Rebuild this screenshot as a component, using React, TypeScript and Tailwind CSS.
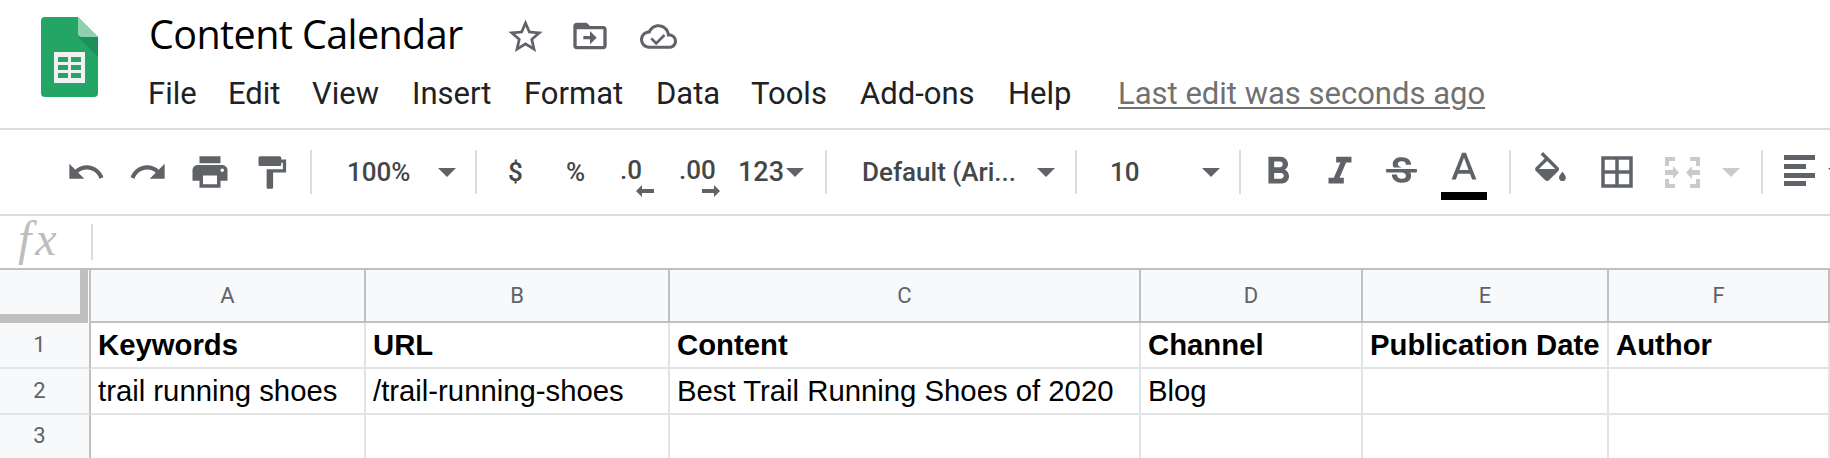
const P = ({ d, className = "" }: { d: string; className?: string }) => (
  <svg viewBox="0 0 24 24" className={`shrink-0 text-[#5f6368] ${className}`} fill="currentColor">
    <path d={d} />
  </svg>
);

const Tri = ({ className = "border-t-[#5f6368]" }: { className?: string }) => (
  <span className={`w-0 h-0 shrink-0 border-l-[9px] border-r-[9px] border-t-[9px] border-l-transparent border-r-transparent ${className}`} />
);

const Sep = ({ className = "" }: { className?: string }) => <span className={`w-[2px] h-[44px] bg-[#dadce0] shrink-0 ${className}`} />;

const menu = [
  { label: "File", cls: "w-[80px]" },
  { label: "Edit", cls: "w-[84px]" },
  { label: "View", cls: "w-[100px]" },
  { label: "Insert", cls: "w-[112px]" },
  { label: "Format", cls: "w-[132px]" },
  { label: "Data", cls: "w-[95px]" },
  { label: "Tools", cls: "w-[109px]" },
  { label: "Add-ons", cls: "w-[148px]" },
  { label: "Help", cls: "w-[110px]" },
];

const cols = ["A", "B", "C", "D", "E", "F"];
const rows = [
  { n: "1", bold: true, last: false, cells: ["Keywords", "URL", "Content", "Channel", "Publication Date", "Author"] },
  { n: "2", bold: false, last: false, cells: ["trail running shoes", "/trail-running-shoes", "Best Trail Running Shoes of 2020", "Blog", "", ""] },
  { n: "3", bold: false, last: true, cells: ["", "", "", "", "", ""] },
];

function Logo() {
  return (
    <svg viewBox="0 0 57 80" className="w-[57px] h-[80px] shrink-0">
      <path d="M4 0h33l20 20v56a4 4 0 0 1-4 4H4a4 4 0 0 1-4-4V4a4 4 0 0 1 4-4z" fill="#23a566" />
      <path d="M37 20l20 20V20z" fill="#1c8f5a" />
      <path d="M37 0l20 20H41a4 4 0 0 1-4-4z" fill="#8ed1b1" />
      <rect x="13" y="35" width="31" height="31" fill="#f1f1f1" />
      <g fill="#23a566">
        <rect x="17" y="40" width="10" height="5" />
        <rect x="30" y="40" width="10" height="5" />
        <rect x="17" y="48" width="10" height="5" />
        <rect x="30" y="48" width="10" height="5" />
        <rect x="17" y="56" width="10" height="5" />
        <rect x="30" y="56" width="10" height="5" />
      </g>
    </svg>
  );
}

export default function App() {
  return (
    <div className="w-[1830px] h-[458px] overflow-hidden bg-white font-['Roboto',sans-serif]">
      {/* title + menus */}
      <header className="h-[130px] border-b-2 border-[#dadce0] flex items-start">
        <div className="ml-[41px] mt-[17px]">
          <Logo />
        </div>
        <div className="ml-[50px]">
          <div className="flex items-center h-[56px] mt-[8px]">
            <h1 className="text-[39.5px] leading-none text-black font-['Open_Sans',sans-serif] tracking-[-0.6px] w-[357px] pl-[1px] -mt-[2px] whitespace-nowrap">Content Calendar</h1>
            <P className="w-[41px] h-[41px]" d="M22 9.24l-7.19-.62L12 2 9.19 8.63 2 9.24l5.46 4.73L5.82 21 12 17.27 18.18 21l-1.63-7.03L22 9.24zM12 15.4l-3.76 2.27 1-4.28-3.32-2.88 4.38-.38L12 6.1l1.71 4.04 4.38.38-3.32 2.88 1 4.28L12 15.4z" />
            <P className="w-[40px] h-[40px] ml-[24px]" d="M20 6h-8l-2-2H4c-1.1 0-2 .9-2 2v12c0 1.1.9 2 2 2h16c1.1 0 2-.9 2-2V8c0-1.1-.9-2-2-2zm0 12H4V8h16v10zm-8-1l4-4-4-4v3H8v2h4z" />
            <P className="w-[37px] h-[37px] ml-[30px]" d="M19.35 10.04C18.67 6.59 15.64 4 12 4 9.11 4 6.6 5.64 5.35 8.04 2.34 8.36 0 10.91 0 14c0 3.31 2.69 6 6 6h13c2.76 0 5-2.24 5-5 0-2.64-2.05-4.78-4.65-4.96zM19 18H6c-2.21 0-4-1.79-4-4s1.79-4 4-4h.71C7.37 7.69 9.48 6 12 6c3.04 0 5.5 2.46 5.5 5.5v.5H19c1.66 0 3 1.34 3 3s-1.34 3-3 3zM10.5 15.2l-2.6-2.6-1.2 1.2 3.8 3.8 6-6-1.2-1.2z" />
          </div>
          <nav className="flex items-center h-[40px] mt-[9px] whitespace-nowrap">
            {menu.map((m) => (
              <span key={m.label} className={`text-[31px] leading-none text-[#202124] ${m.cls}`}>{m.label}</span>
            ))}
            <span className="text-[31px] leading-none text-[#717171] underline underline-offset-[3px] decoration-2">Last edit was seconds ago</span>
          </nav>
        </div>
      </header>

      {/* toolbar */}
      <div className="h-[86px] border-b-2 border-[#dadce0] flex items-center text-[#444746] text-[26px] font-medium whitespace-nowrap overflow-hidden">
        <P className="w-[40px] h-[40px] ml-[66px]" d="M12.5 8c-2.65 0-5.05.99-6.9 2.6L2 7v9h9l-3.62-3.62c1.39-1.16 3.16-1.88 5.12-1.88 3.54 0 6.55 2.31 7.6 5.5l2.37-.78C21.08 11.03 17.15 8 12.5 8z" />
        <P className="w-[40px] h-[40px] ml-[22px]" d="M18.4 10.6C16.55 8.99 14.15 8 11.5 8c-4.65 0-8.58 3.03-9.96 7.22L3.9 16c1.05-3.19 4.05-5.5 7.6-5.5 1.95 0 3.73.72 5.12 1.88L13 16h9V7l-3.6 3.6z" />
        <P className="w-[42px] h-[42px] ml-[21px]" d="M19 8H5c-1.66 0-3 1.34-3 3v6h4v4h12v-4h4v-6c0-1.66-1.34-3-3-3zm-3 11H8v-5h8v5zm3-7c-.55 0-1-.45-1-1s.45-1 1-1 1 .45 1 1-.45 1-1 1zm-1-9H6v4h12V3z" />
        <P className="w-[39px] h-[39px] ml-[21px]" d="M18 4V3c0-.55-.45-1-1-1H5c-.55 0-1 .45-1 1v4c0 .55.45 1 1 1h12c.55 0 1-.45 1-1V6h1v4H9v11c0 .55.45 1 1 1h2c.55 0 1-.45 1-1v-9h8V4h-3z" />
        <Sep className="ml-[19px]" />
        <span className="ml-[35px] w-[91px] shrink-0">100%</span>
        <Tri />
        <Sep className="ml-[19px]" />
        <span className="ml-[31px] w-[58px] shrink-0">$</span>
        <span className="w-[54px] shrink-0">%</span>
        <span className="relative w-[59px] shrink-0 leading-none -mt-[4px]">
          .0
          <span className="absolute left-[16px] top-[28px] text-[#5f6368]"><ArrowLeft /></span>
        </span>
        <span className="relative w-[59px] shrink-0 leading-none -mt-[4px]">
          .00
          <span className="absolute left-[23px] top-[28px] text-[#5f6368]"><ArrowRight /></span>
        </span>
        <span className="w-[48px] shrink-0 text-[27px]">123</span>
        <Tri />
        <Sep className="ml-[21px]" />
        <span className="ml-[35px] w-[175px] shrink-0">Default (Ari...</span>
        <Tri />
        <Sep className="ml-[20px]" />
        <span className="ml-[33px] w-[92px] shrink-0">10</span>
        <Tri />
        <Sep className="ml-[19px]" />
        <P className="w-[46px] h-[46px] ml-[14px]" d="M15.6 10.79c.97-.67 1.65-1.77 1.65-2.79 0-2.26-1.75-4-4-4H7v14h7.04c2.09 0 3.71-1.7 3.71-3.79 0-1.52-.86-2.82-2.15-3.42zM10 6.5h3c.83 0 1.5.67 1.5 1.5s-.67 1.5-1.5 1.5h-3v-3zm3.5 9H10v-3h3.5c.83 0 1.5.67 1.5 1.5s-.67 1.5-1.5 1.5z" />
        <P className="w-[46px] h-[46px] ml-[16px]" d="M10 4v3h2.21l-3.42 8H6v3h8v-3h-2.21l3.42-8H18V4z" />
        <P className="w-[41px] h-[41px] ml-[18px]" d="M7.24 8.75c-.26-.48-.39-1.03-.39-1.67 0-.61.13-1.16.4-1.67.26-.5.63-.93 1.11-1.29.48-.35 1.05-.63 1.7-.83.66-.19 1.39-.29 2.18-.29.81 0 1.54.11 2.21.34.66.22 1.23.54 1.69.94.47.4.83.88 1.08 1.43.25.55.38 1.15.38 1.81h-3.01c0-.31-.05-.59-.15-.85-.09-.27-.24-.49-.44-.68-.2-.19-.45-.33-.75-.44-.3-.1-.66-.16-1.06-.16-.39 0-.74.04-1.03.13-.29.09-.53.21-.72.36-.19.16-.34.34-.44.55-.1.21-.15.43-.15.66 0 .48.25.88.74 1.21.38.25.77.48 1.41.7H7.39c-.05-.08-.11-.17-.15-.25zM21 12v-2H3v2h9.62c.18.07.4.14.55.2.37.17.66.34.87.51.21.17.35.36.43.57.07.2.11.43.11.69 0 .23-.05.45-.14.66-.09.2-.23.38-.42.53-.19.15-.42.26-.71.35-.29.08-.63.13-1.01.13-.43 0-.83-.04-1.18-.13s-.66-.23-.91-.42c-.25-.19-.45-.44-.59-.75-.14-.31-.25-.76-.25-1.21H6.4c0 .55.08 1.13.24 1.58.16.45.37.85.65 1.21.28.35.6.66.98.92.37.26.78.48 1.22.65.44.17.9.3 1.38.39.48.08.96.13 1.44.13.8 0 1.53-.09 2.18-.28s1.21-.45 1.67-.79c.46-.34.82-.77 1.07-1.27s.38-1.07.38-1.71c0-.6-.1-1.14-.31-1.61-.05-.11-.11-.23-.17-.33H21z" />
        <div className="ml-[19px] w-[46px] shrink-0 flex flex-col items-center mt-[3px]">
          <P className="w-[46px] h-[46px]" d="M11 3L5.5 17h2.25l1.12-3h6.25l1.12 3h2.25L13 3h-2zm-1.38 9L12 5.67 14.38 12H9.62z" />
          <span className="w-[46px] h-[8px] bg-black -mt-[1px]" />
        </div>
        <Sep className="ml-[22px]" />
        <P className="w-[41px] h-[41px] ml-[19px]" d="M16.56 8.94L7.62 0 6.21 1.41l2.38 2.38-5.15 5.15c-.59.59-.59 1.54 0 2.12l5.5 5.5c.29.29.68.44 1.06.44s.77-.15 1.06-.44l5.5-5.5c.59-.58.59-1.53 0-2.12zM5.21 10L10 5.21 14.79 10H5.21zM19 11.5s-2 2.17-2 3.5c0 1.1.9 2 2 2s2-.9 2-2c0-1.33-2-3.5-2-3.5z" />
        <P className="w-[42px] h-[42px] ml-[25px]" d="M3 3v18h18V3H3zm8 16H5v-6h6v6zm0-8H5V5h6v6zm8 8h-6v-6h6v6zm0-8h-6V5h6v6z" />
        <svg viewBox="0 0 35 31" className="w-[35px] h-[31px] ml-[27px] text-[#c9cacc] shrink-0" fill="currentColor">
          <path d="M0 0h10v4H4v5H0zM25 0h10v9h-4V4h-6zM0 22h4v5h6v4H0zM31 22h4v9H25v-4h6zM0 13h8v-4l6 6.500-6 6.500v-4H0zM35 13h-8v-4l-6 6.500 6 6.500v-4h8z" />
        </svg>
        <Tri className="ml-[22px] border-t-[#c9cacc]" />
        <Sep className="ml-[21px]" />
        <svg viewBox="0 0 31 31" className="w-[31px] h-[31px] ml-[21px] -mt-[3px] text-[#5f6368] shrink-0" fill="currentColor">
          <path d="M0 0h31v5H0zM0 9h22v5H0zM0 18h31v5H0zM0 26h22v5H0z" />
        </svg>
        <Tri className="ml-[13px] border-t-[#5f6368]" />
      </div>

      {/* formula bar */}
      <div className="h-[52px] flex items-center">
        <span className="ml-[18px] w-[73px] -mt-[6px] text-[48px] leading-none italic tracking-[4px] text-[#bdbdbd] font-['Liberation_Serif',serif]">fx</span>
        <span className="w-[2px] h-[36px] bg-[#dadce0]" />
      </div>

      {/* sheet */}
      <div className="grid grid-cols-[91px_275px_304px_471px_222px_246px_221px] grid-rows-[53px_46px_46px_1fr] h-[190px] border-t-2 border-[#c0c0c0] font-['Liberation_Sans',sans-serif] text-[29.3px] text-black">
        <div className="bg-[#f8f9fa] border-r-2 border-[#c0c0c0] pr-px">
          <div className="h-full border-r-[8px] border-b-[9px] border-[#c0c0c0]" />
        </div>
        {cols.map((c) => (
          <div key={c} className="bg-[#f8f9fa] border-r-2 border-b-2 border-[#c0c0c0] flex items-center justify-center font-['Roboto',sans-serif] text-[22px] text-[#5f6368]">{c}</div>
        ))}
        {rows.map((r) => (
          <Row key={r.n} n={r.n} bold={r.bold} last={r.last} cells={r.cells} />
        ))}
      </div>
    </div>
  );
}

function Row({ n, bold, last, cells }: { n: string; bold: boolean; last: boolean; cells: string[] }) {
  return (
    <>
      <div className={`border-r-2 border-r-[#c0c0c0] border-b-[#e2e3e3] bg-[#f8f9fa] flex items-center justify-center pr-[10px] pb-[2px] font-['Roboto',sans-serif] text-[22px] text-[#5f6368] ${last ? "" : "border-b-2"}`}>{n}</div>
      {cells.map((c, i) => (
        <div key={i} className={`border-r-2 border-[#e2e3e3] pl-[7px] flex items-center whitespace-nowrap ${last ? "" : "border-b-2"} ${bold ? "font-bold" : ""}`}>{c}</div>
      ))}
    </>
  );
}

function ArrowLeft() {
  return (
    <svg viewBox="0 0 18 12" className="w-[18px] h-[12px] block" fill="currentColor">
      <path d="M0 6l6-6v4h12v4H6v4z" />
    </svg>
  );
}

function ArrowRight() {
  return (
    <svg viewBox="0 0 18 12" className="w-[18px] h-[12px] block" fill="currentColor">
      <path d="M18 6l-6-6v4H0v4h12v4z" />
    </svg>
  );
}
